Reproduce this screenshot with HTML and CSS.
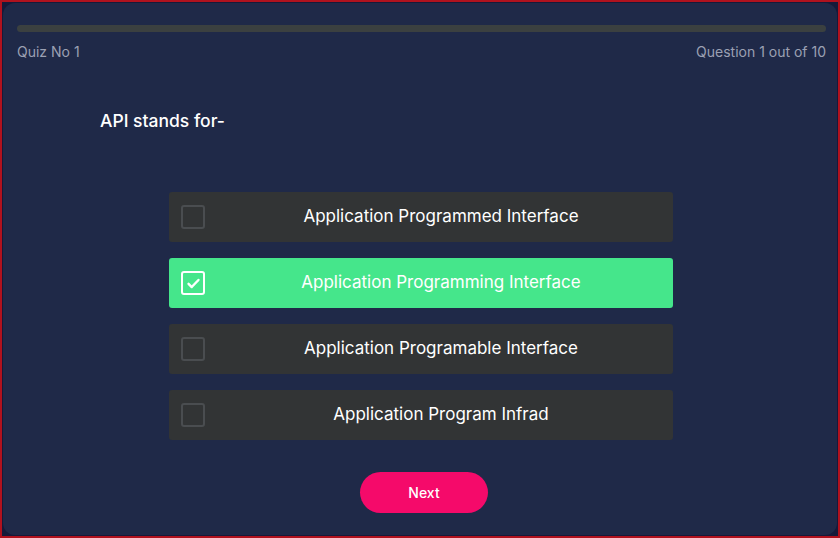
FILE: index.html
```html
<!DOCTYPE html>
<html>
<head>
<meta charset="utf-8">
<link rel="stylesheet" href="styles.css">
</head>
<body>
<div class="frame">
  <div class="card">
    <div class="progress"><div class="progress-fill"></div></div>
    <div class="meta">
      <span>Quiz No 1</span>
      <span>Question 1 out of 10</span>
    </div>
    <h2 class="question">API stands for-</h2>
    <div class="options">
      <div class="option">
        <span class="box"></span>
        <span class="label">Application Programmed Interface</span>
      </div>
      <div class="option selected">
        <span class="box">
          <svg viewBox="0 0 24 24" width="17" height="17"><path d="M5 12.5l4.5 4.5L19 7" fill="none" stroke="#fff" stroke-width="3.4" stroke-linecap="round" stroke-linejoin="round"/></svg>
        </span>
        <span class="label">Application Programming Interface</span>
      </div>
      <div class="option">
        <span class="box"></span>
        <span class="label">Application Programable Interface</span>
      </div>
      <div class="option">
        <span class="box"></span>
        <span class="label">Application Program Infrad</span>
      </div>
    </div>
    <div class="actions">
      <button class="next">Next</button>
    </div>
  </div>
</div>
</body>
</html>
```
FILE: styles.css
```css
html, body {
  margin: 0;
  padding: 0;
  width: 840px;
  height: 538px;
  overflow: hidden;
}
body {
  font-family: Inter, "Noto Sans", sans-serif;
  background: #b0121e;
}
.frame {
  box-sizing: border-box;
  margin: 2px;
  width: 836px;
  height: 534px;
  background: #161a3a;
  padding: 1px;
}
.card {
  box-sizing: border-box;
  height: 532px;
  background: #1f2948;
  border-radius: 12px;
  padding: 22px 11px 0 14px;
  display: flex;
  flex-direction: column;
}
.progress {
  height: 7px;
  border-radius: 4px;
  background: #3b4040;
}
.meta {
  display: flex;
  justify-content: space-between;
  margin-top: 11px;
  font-size: 14px;
  color: #9ba0b3;
  line-height: 18px;
}
.question {
  margin: 48px 0 0 83px;
  font-size: 17.5px;
  font-weight: 500;
  color: #fff;
  line-height: 24px;
}
.options {
  margin: 59px 0 0 152px;
  width: 504px;
  display: flex;
  flex-direction: column;
  gap: 16px;
}
.option {
  height: 50px;
  background: #323435;
  border-radius: 3px;
  display: flex;
  align-items: center;
  padding-left: 12px;
  color: #fff;
}
.option.selected {
  background: #45e68b;
}
.box {
  box-sizing: border-box;
  width: 24px;
  height: 24px;
  border: 2px solid #4a4d50;
  border-radius: 3px;
  display: flex;
  align-items: center;
  justify-content: center;
  flex: none;
}
.selected .box {
  border-color: #fff;
  border-width: 2.5px;
}
.label {
  flex: 1;
  text-align: center;
  margin-left: 4px;
  padding-bottom: 3px;
  font-size: 17px;
  font-weight: 400;
}
.actions {
  margin-top: 32px;
  display: flex;
  padding-left: 343px;
}
.next {
  width: 128px;
  height: 41px;
  border: none;
  border-radius: 21px;
  background: #f50a6a;
  color: #fff;
  font-family: inherit;
  font-size: 14px;
  font-weight: 500;
}
```
